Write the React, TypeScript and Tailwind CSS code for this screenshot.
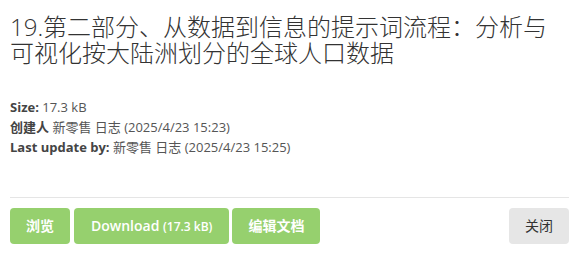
export default function App() {
  return (
    <div className="bg-white pl-[10px] pr-[7px] pt-[14px] font-['Open_Sans','Noto_Sans_CJK_SC',sans-serif]">
      <h3 className="text-[24px] font-light leading-[1.1] text-[#333] font-['Open_Sans','Noto_Sans_CJK_SC',sans-serif]">
        19.第二部分、从数据到信息的提示词流程：分析与可视化按大陆洲划分的全球人口数据
      </h3>
      <div className="mt-[30px] text-[13px] leading-[20px] text-[#555]">
        <div>
          <span className="font-bold text-[#444]">Size:</span> 17.3 kB
        </div>
        <div>
          <span className="font-bold text-[#444]">创建人</span> 新零售 日志 (2025/4/23 15:23)
        </div>
        <div>
          <span className="font-bold text-[#444]">Last update by:</span> 新零售 日志 (2025/4/23 15:25)
        </div>
      </div>
      <div className="mt-[40px] border-t border-[#e5e5e5]" />
      <div className="mt-[10px] flex items-center justify-between">
        <div className="flex">
          <button className="h-[36px] rounded-[4px] bg-[#96d06e] px-[16px] text-[14px] font-bold text-white">
            浏览
          </button>
          <button className="ml-[4px] h-[36px] rounded-[4px] bg-[#96d06e] px-[17px] text-[14px] font-semibold text-white">
            Download <span className="text-[12px]">(17.3 kB)</span>
          </button>
          <button className="ml-[3px] h-[36px] rounded-[4px] bg-[#96d06e] px-[16px] text-[14px] font-bold text-white">
            编辑文档
          </button>
        </div>
        <button className="h-[36px] rounded-[4px] bg-[#e6e6e6] px-[16px] text-[14px] text-[#333]">
          关闭
        </button>
      </div>
    </div>
  );
}
